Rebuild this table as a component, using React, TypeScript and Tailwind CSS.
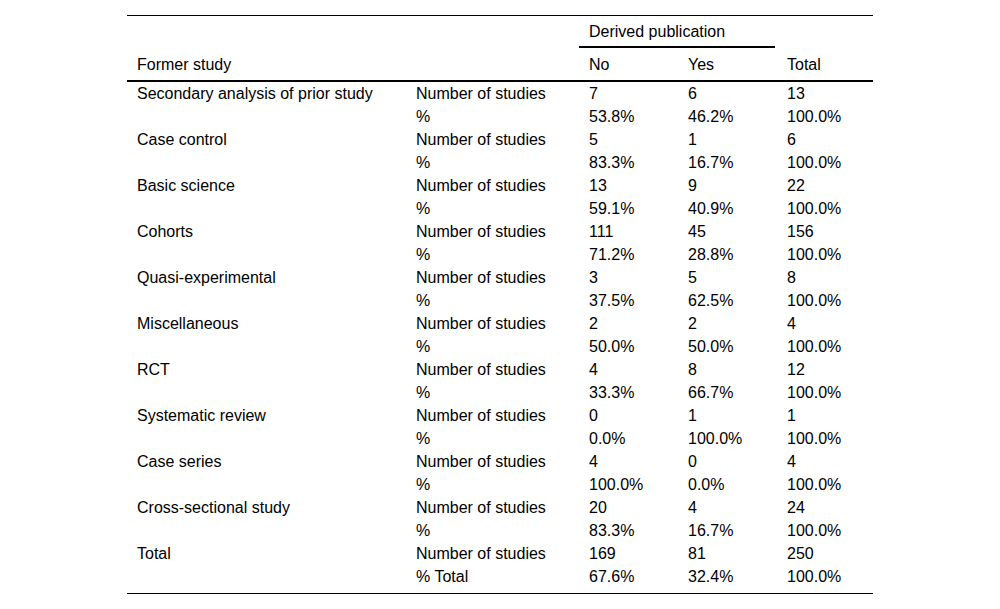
const rows: [string, string[], string[]][] = [
  ["Secondary analysis of prior study", ["7", "6", "13"], ["53.8%", "46.2%", "100.0%"]],
  ["Case control", ["5", "1", "6"], ["83.3%", "16.7%", "100.0%"]],
  ["Basic science", ["13", "9", "22"], ["59.1%", "40.9%", "100.0%"]],
  ["Cohorts", ["111", "45", "156"], ["71.2%", "28.8%", "100.0%"]],
  ["Quasi-experimental", ["3", "5", "8"], ["37.5%", "62.5%", "100.0%"]],
  ["Miscellaneous", ["2", "2", "4"], ["50.0%", "50.0%", "100.0%"]],
  ["RCT", ["4", "8", "12"], ["33.3%", "66.7%", "100.0%"]],
  ["Systematic review", ["0", "1", "1"], ["0.0%", "100.0%", "100.0%"]],
  ["Case series", ["4", "0", "4"], ["100.0%", "0.0%", "100.0%"]],
  ["Cross-sectional study", ["20", "4", "24"], ["83.3%", "16.7%", "100.0%"]],
  ["Total", ["169", "81", "250"], ["67.6%", "32.4%", "100.0%"]],
];

export default function App() {
  return (
    <div className="w-[1000px] h-[609px] bg-white pt-[15px] font-[family-name:Liberation_Sans,Arial,sans-serif] text-[16px] text-black">
      <div className="mx-auto w-[746px] border-t border-b border-black pb-[5px]">
        <table className="w-full border-collapse table-fixed">
          <colgroup>
            <col className="w-[279px]" />
            <col className="w-[173px]" />
            <col className="w-[99px]" />
            <col className="w-[99px]" />
            <col className="w-[96px]" />
          </colgroup>
          <thead>
            <tr className="h-[32px]">
              <th colSpan={2} />
              <th colSpan={2} className="p-0 font-normal text-left align-bottom">
                <div className="mr-[2px] border-b-2 border-black px-[10px] pb-[5px] leading-[18px]">Derived publication</div>
              </th>
              <th />
            </tr>
            <tr className="h-[33px] border-b-2 border-black">
              <th className="px-[10px] pt-[2px] font-normal text-left align-middle">Former study</th>
              <th />
              <th className="px-[10px] pt-[2px] font-normal text-left">No</th>
              <th className="px-[10px] pt-[2px] font-normal text-left">Yes</th>
              <th className="px-[10px] pt-[2px] font-normal text-left">Total</th>
            </tr>
          </thead>
          <tbody>
            {rows.map(([name, counts, pcts], i) => (
              <>
                <tr key={`${i}a`} className="h-[23px] leading-[23px]">
                  <td className="px-[10px] py-0">{name}</td>
                  <td className="px-[10px] py-0">Number of studies</td>
                  {counts.map((c, j) => (
                    <td key={j} className="px-[10px] py-0">{c}</td>
                  ))}
                </tr>
                <tr key={`${i}b`} className="h-[23px] leading-[23px]">
                  <td className="px-[10px] py-0" />
                  <td className="px-[10px] py-0">{name === "Total" ? "% Total" : "%"}</td>
                  {pcts.map((p, j) => (
                    <td key={j} className="px-[10px] py-0">{p}</td>
                  ))}
                </tr>
              </>
            ))}
          </tbody>
        </table>
      </div>
    </div>
  );
}
